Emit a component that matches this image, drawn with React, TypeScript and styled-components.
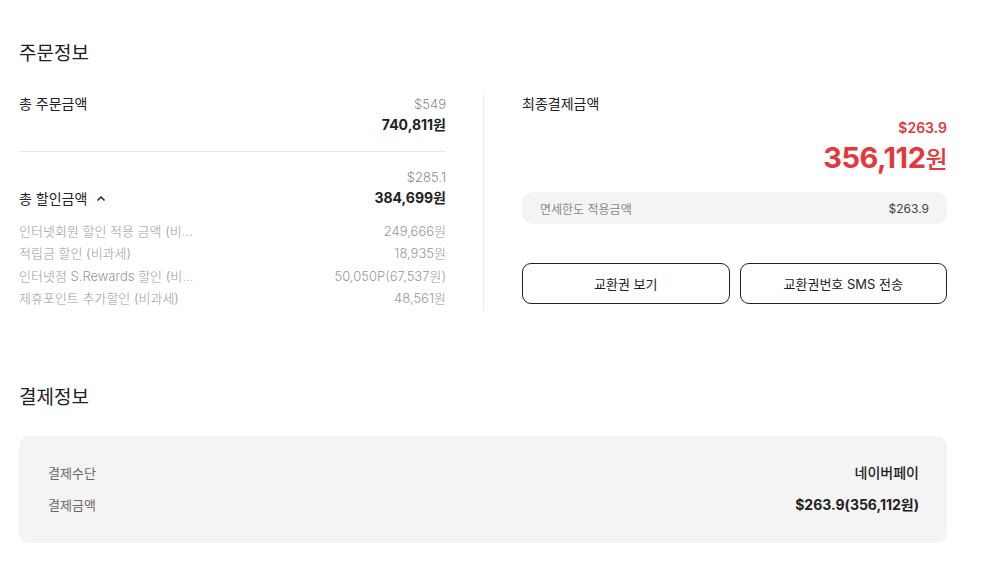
import styled, { createGlobalStyle } from 'styled-components'

const GlobalStyle = createGlobalStyle`
  body {
    margin: 0;
    background: #fff;
    font-family: Inter, "Noto Sans CJK KR", sans-serif;
    color: #222;
  }
`;

const discounts = [
  { label: '인터넷회원 할인 적용 금액 (비…', value: '249,666원' },
  { label: '적립금 할인 (비과세)', value: '18,935원' },
  { label: '인터넷점 S.Rewards 할인 (비…', value: '50,050P(67,537원)' },
  { label: '제휴포인트 추가할인 (비과세)', value: '48,561원' },
];

const App = () => {
  return (
    <>
      <GlobalStyle />
      <Page>
        <SectionTitle>주문정보</SectionTitle>
        <OrderGrid>
          <LeftCol>
            <SumRow>
              <SumLabel>총 주문금액</SumLabel>
              <SumValues>
                <Usd>$549</Usd>
                <Krw>740,811원</Krw>
              </SumValues>
            </SumRow>
            <Divider />
            <SumRow $discount>
              <SumLabel>
                총 할인금액
                <svg width="10" height="10" viewBox="0 0 10 10" fill="none">
                  <path d="M1.5 6.5L5 3L8.5 6.5" stroke="#222" strokeWidth="1.5" />
                </svg>
              </SumLabel>
              <SumValues>
                <Usd>$285.1</Usd>
                <Krw>384,699원</Krw>
              </SumValues>
            </SumRow>
            <DetailList>
              {discounts.map((d) => (
                <DetailRow key={d.label}>
                  <span>{d.label}</span>
                  <span>{d.value}</span>
                </DetailRow>
              ))}
            </DetailList>
          </LeftCol>
          <VLine />
          <RightCol>
            <SumLabel>최종결제금액</SumLabel>
            <FinalUsd>$263.9</FinalUsd>
            <FinalKrw>356,112<small>원</small></FinalKrw>
            <LimitBox>
              <span>면세한도 적용금액</span>
              <strong>$263.9</strong>
            </LimitBox>
            <ButtonRow>
              <OutlineButton>교환권 보기</OutlineButton>
              <OutlineButton>교환권번호 SMS 전송</OutlineButton>
            </ButtonRow>
          </RightCol>
        </OrderGrid>

        <SectionTitle $second>결제정보</SectionTitle>
        <PayBox>
          <PayRow>
            <PayLabel>결제수단</PayLabel>
            <PayValue>네이버페이</PayValue>
          </PayRow>
          <PayRow>
            <PayLabel>결제금액</PayLabel>
            <PayValue $bold>$263.9(356,112원)</PayValue>
          </PayRow>
        </PayBox>
      </Page>
    </>
  )
}

const Page = styled.div`
  width: 928px;
  margin-left: 19px;
  padding-top: 41px;
`;

const SectionTitle = styled.h2<{ $second?: boolean }>`
  margin: ${(p) => (p.$second ? '75px 0 0' : '0')};
  font-size: 19px;
  line-height: 26px;
  font-weight: 400;
  color: #222;
`;

const OrderGrid = styled.div`
  display: grid;
  grid-template-columns: 427px 1px 1fr;
  column-gap: 37px;
  margin-top: 27px;
`;

const LeftCol = styled.div`
  display: flex;
  flex-direction: column;
`;

const RightCol = styled.div`
  display: flex;
  flex-direction: column;
  padding-left: 1px;
`;

const VLine = styled.div`
  background: #eaeaea;
  height: 216px;
`;

const SumRow = styled.div<{ $discount?: boolean }>`
  display: flex;
  justify-content: space-between;
  align-items: ${(p) => (p.$discount ? 'flex-end' : 'flex-start')};
  margin-top: ${(p) => (p.$discount ? '15px' : '0')};
`;

const SumLabel = styled.div`
  display: flex;
  align-items: center;
  gap: 9px;
  font-size: 14px;
  line-height: 20px;
  font-weight: 400;
  color: #222;
`;

const SumValues = styled.div`
  display: flex;
  flex-direction: column;
  align-items: flex-end;
`;

const Usd = styled.span`
  font-size: 13px;
  line-height: 20px;
  color: #8a8a8a;
  font-weight: 300;
`;

const Krw = styled.span`
  font-size: 14px;
  line-height: 22px;
  font-weight: 700;
  color: #222;
`;

const Divider = styled.div`
  height: 1px;
  background: #eaeaea;
  margin-top: 15px;
`;

const DetailList = styled.div`
  display: flex;
  flex-direction: column;
  margin-top: 11px;
`;

const DetailRow = styled.div`
  display: flex;
  justify-content: space-between;
  font-size: 13px;
  line-height: 22.4px;
  color: #999;
  font-weight: 300;
`;

const FinalUsd = styled.div`
  text-align: right;
  margin-top: 4px;
  font-size: 14px;
  line-height: 20px;
  font-weight: 600;
  color: #e0393e;
`;

const FinalKrw = styled.div`
  text-align: right;
  font-size: 29px;
  line-height: 40px;
  font-weight: 700;
  color: #e0393e;
  letter-spacing: -0.5px;
  small {
    font-size: 24px;
    font-weight: 500;
  }
`;

const LimitBox = styled.div`
  display: flex;
  justify-content: space-between;
  align-items: center;
  height: 32px;
  margin-top: 12px;
  padding: 0 18px;
  background: #f4f4f4;
  border-radius: 10px;
  font-size: 12px;
  span {
    color: #8a8a8a;
  }
  strong {
    color: #444;
    font-weight: 400;
  }
`;

const ButtonRow = styled.div`
  display: grid;
  grid-template-columns: 1fr 1fr;
  gap: 10px;
  margin-top: 39px;
`;

const OutlineButton = styled.button`
  height: 41px;
  border: 1px solid #222;
  border-radius: 9px;
  background: #fff;
  font-family: Inter, "Noto Sans CJK KR", sans-serif;
  font-size: 13px;
  color: #222;
  cursor: pointer;
`;

const PayBox = styled.div`
  margin-top: 25px;
  background: #f4f4f4;
  border-radius: 10px;
  padding: 26px 28px 27px 29px;
  display: flex;
  flex-direction: column;
  gap: 10px;
`;

const PayRow = styled.div`
  display: flex;
  justify-content: space-between;
  align-items: center;
  line-height: 22px;
`;

const PayLabel = styled.span`
  font-size: 13px;
  color: #6a6a6a;
`;

const PayValue = styled.span<{ $bold?: boolean }>`
  font-size: 14px;
  color: #222;
  font-weight: ${(p) => (p.$bold ? 700 : 500)};
`;

export default App
